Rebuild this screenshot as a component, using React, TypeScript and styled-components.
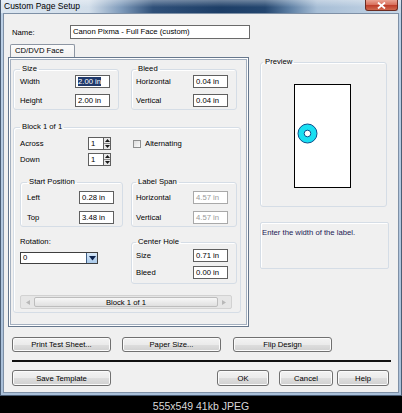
import styled, { createGlobalStyle } from 'styled-components';

const GlobalStyle = createGlobalStyle`
  html, body {
    margin: 0;
    padding: 0;
    background: #000;
  }
  body {
    font-family: "Liberation Sans", Arial, sans-serif;
    font-size: 7.7px;
    color: #000;
  }
  * {
    box-sizing: border-box;
  }
`;

export default function App() {
  return (
    <>
      <GlobalStyle />
      <Page>
        <Window>
          <TitleBar>
            <Title>Custom Page Setup</Title>
            <CloseButton>
              <svg width="9" height="7" viewBox="0 0 9 7">
                <path d="M1 0.5 L8 6.5 M8 0.5 L1 6.5" stroke="#fff" strokeWidth="1.8" />
              </svg>
            </CloseButton>
          </TitleBar>
          <Client>
            <NameRow>
              <NameLabel>Name:</NameLabel>
              <NameInput>Canon Pixma - Full Face (custom)</NameInput>
            </NameRow>

            <MainRow>
              <LeftCol>
                <Tab>CD/DVD Face</Tab>
                <Panel>
                  <PairRow>
                    <Group $w={106}>
                      <Legend>Size</Legend>
                      <Fields $gap={6} $top={1}>
                        <FieldLabel>Width</FieldLabel>
                        <TextBox>
                          <Selected>2.00 in</Selected>
                        </TextBox>
                        <FieldLabel>Height</FieldLabel>
                        <TextBox>2.00 in</TextBox>
                      </Fields>
                    </Group>
                    <Group $w={106} $left={4}>
                      <Legend>Bleed</Legend>
                      <Fields $gap={6} $top={1}>
                        <FieldLabel>Horizontal</FieldLabel>
                        <TextBox>0.04 in</TextBox>
                        <FieldLabel>Vertical</FieldLabel>
                        <TextBox>0.04 in</TextBox>
                      </Fields>
                    </Group>
                  </PairRow>

                  <BlockGroup>
                    <Legend>Block 1 of 1</Legend>
                    <BlockGrid>
                      <SpinRow>
                        <SpinLabel>Across</SpinLabel>
                        <Spinner value="1" />
                      </SpinRow>
                      <CheckRow>
                        <CheckBox />
                        <span>Alternating</span>
                      </CheckRow>
                      <SpinRow $top={3}>
                        <SpinLabel>Down</SpinLabel>
                        <Spinner value="1" />
                      </SpinRow>
                      <div />

                      <Group $w={103} $mt={11}>
                        <Legend>Start Position</Legend>
                        <Fields $gap={7} $top={4}>
                          <FieldLabel>Left</FieldLabel>
                          <TextBox>0.28 in</TextBox>
                          <FieldLabel>Top</FieldLabel>
                          <TextBox>3.48 in</TextBox>
                        </Fields>
                      </Group>
                      <Group $w={106} $mt={11} $left={4}>
                        <Legend>Label Span</Legend>
                        <Fields $gap={7} $top={4}>
                          <FieldLabel>Horizontal</FieldLabel>
                          <TextBox $disabled>4.57 in</TextBox>
                          <FieldLabel>Vertical</FieldLabel>
                          <TextBox $disabled>4.57 in</TextBox>
                        </Fields>
                      </Group>

                      <RotationCol>
                        <span>Rotation:</span>
                        <Combo>
                          <ComboValue>0</ComboValue>
                          <ComboButton>
                            <svg width="7" height="5" viewBox="0 0 7 5">
                              <path d="M0 0 H7 L3.5 4.5 Z" fill="#0d2450" />
                            </svg>
                          </ComboButton>
                        </Combo>
                      </RotationCol>
                      <Group $w={106} $mt={10} $left={4}>
                        <Legend>Center Hole</Legend>
                        <Fields $gap={4} $top={2} $bottom={4}>
                          <FieldLabel>Size</FieldLabel>
                          <TextBox>0.71 in</TextBox>
                          <FieldLabel>Bleed</FieldLabel>
                          <TextBox>0.00 in</TextBox>
                        </Fields>
                      </Group>

                      <ScrollBar>
                        <ScrollArrow>
                          <svg width="4" height="5" viewBox="0 0 4 5">
                            <path d="M4 0 V5 L0 2.5 Z" fill="#b8b8b8" />
                          </svg>
                        </ScrollArrow>
                        <ScrollThumb>Block 1 of 1</ScrollThumb>
                        <ScrollArrow>
                          <svg width="4" height="5" viewBox="0 0 4 5">
                            <path d="M0 0 V5 L4 2.5 Z" fill="#b8b8b8" />
                          </svg>
                        </ScrollArrow>
                      </ScrollBar>
                    </BlockGrid>
                  </BlockGroup>
                </Panel>
              </LeftCol>

              <RightCol>
                <PreviewGroup>
                  <Legend>Preview</Legend>
                  <LabelSheet>
                    <svg width="55" height="102" viewBox="0 0 55 102">
                      <circle cx="12.5" cy="48.5" r="9.5" fill="#19dff2" stroke="#0b4f8c" strokeWidth="1" />
                      <circle cx="12.5" cy="48.5" r="3.3" fill="#fff" stroke="#0b4f8c" strokeWidth="1" />
                    </svg>
                  </LabelSheet>
                </PreviewGroup>
                <HintBox>Enter the width of the label.</HintBox>
              </RightCol>
            </MainRow>

            <ButtonRow $top={10}>
              <Button $w={99}>Print Test Sheet...</Button>
              <Button $w={99} $ml={11}>Paper Size...</Button>
              <Button $w={99} $ml={12}>Flip Design</Button>
            </ButtonRow>
            <Separator />
            <ButtonRow $top={0}>
              <Button $w={99} $h={16}>Save Template</Button>
              <Spacer />
              <Button $w={52} $h={16}>OK</Button>
              <Button $w={54} $h={16} $ml={10}>Cancel</Button>
              <Button $w={52} $h={16} $ml={4}>Help</Button>
            </ButtonRow>
          </Client>
        </Window>
        <Caption>555x549 41kb JPEG</Caption>
      </Page>
    </>
  );
}

function Spinner({ value }: { value: string }) {
  return (
    <SpinBox>
      <SpinField>{value}</SpinField>
      <SpinArrows>
        <SpinHalf>
          <svg width="5" height="3" viewBox="0 0 5 3">
            <path d="M0 3 H5 L2.5 0 Z" fill="#1a1a1a" />
          </svg>
        </SpinHalf>
        <SpinHalf>
          <svg width="5" height="3" viewBox="0 0 5 3">
            <path d="M0 0 H5 L2.5 3 Z" fill="#1a1a1a" />
          </svg>
        </SpinHalf>
      </SpinArrows>
    </SpinBox>
  );
}

const Page = styled.div`
  width: 402px;
  height: 413px;
  display: flex;
  flex-direction: column;
  background: #000;
  overflow: hidden;
`;

const Window = styled.div`
  width: 402px;
  height: 396px;
  display: flex;
  flex-direction: column;
  border: 1px solid #4a5d74;
  border-top: none;
  background: linear-gradient(#bcd0e6, #a9bfd8);
`;

const TitleBar = styled.div`
  height: 13px;
  display: flex;
  justify-content: space-between;
  align-items: flex-start;
  background:
    linear-gradient(rgba(255, 255, 255, 0.35), rgba(255, 255, 255, 0) 55%),
    linear-gradient(
      to right,
      #dbe6f1 0%,
      #d2deea 22%,
      #7f9bbb 30%,
      #2f5079 38%,
      #1d3e67 55%,
      #24466f 66%,
      #5c7ea3 72%,
      #a7bed6 79%,
      #c6d6e6 100%
    );
`;

const Title = styled.span`
  padding-left: 3px;
  line-height: 13px;
  font-size: 8.5px;
  color: #000;
`;

const CloseButton = styled.div`
  width: 33px;
  height: 11px;
  margin-right: 3px;
  display: flex;
  align-items: center;
  justify-content: center;
  border: 1px solid #6b2c22;
  border-top: none;
  border-radius: 0 0 3px 3px;
  background: linear-gradient(#eba493 0%, #d9735f 45%, #bf3f2b 55%, #d06a4f 100%);
`;

const Client = styled.div`
  flex: 1;
  margin: 0 2px 2px;
  padding: 11px 9px 0 4px;
  display: flex;
  flex-direction: column;
  border: 1px solid #7e90a6;
  background: #f0f0f0;
`;

const NameRow = styled.div`
  display: flex;
  align-items: center;
  height: 14px;
  padding-left: 4px;
`;

const NameLabel = styled.span`
  width: 58px;
`;

const NameInput = styled.div`
  width: 180px;
  height: 14px;
  padding-left: 2px;
  line-height: 12px;
  border: 1px solid #6a6a6a;
  background: #fff;
`;

const MainRow = styled.div`
  display: flex;
  margin-top: 5px;
`;

const LeftCol = styled.div`
  width: 242px;
  display: flex;
  flex-direction: column;
`;

const Tab = styled.div`
  width: 65px;
  height: 13px;
  margin-left: 2px;
  padding-left: 4px;
  line-height: 12px;
  border: 1px solid #8d96a3;
  border-bottom: none;
  border-radius: 2px 2px 0 0;
  background: linear-gradient(#fbfbfb, #f1f1f1);
`;

const Panel = styled.div`
  height: 270px;
  padding: 6px 3px 0 4px;
  border: 1px solid #66778d;
  box-shadow: inset 0 0 0 1px #ffffff, inset 0 0 0 2px #a4b0c0;
  background: #f0f0f0;
`;

const PairRow = styled.div`
  display: flex;
  gap: 12px;
`;

const Group = styled.fieldset<{ $w: number; $mt?: number; $left?: number }>`
  width: ${(p) => p.$w}px;
  min-width: 0;
  margin: ${(p) => p.$mt ?? 0}px 0 0;
  padding: 0 8px 0 ${(p) => p.$left ?? 6}px;
  border: 1px solid #d5dde6;
  border-radius: 3px;
  box-shadow: inset 1px 1px 0 #ffffff;
`;

const Legend = styled.legend`
  padding: 0 2px;
  line-height: 10px;
  font-size: 7.7px;
  color: #000;
`;

const Fields = styled.div<{ $gap: number; $top: number; $bottom?: number }>`
  display: grid;
  grid-template-columns: 1fr 35px;
  grid-auto-rows: 13px;
  row-gap: ${(p) => p.$gap}px;
  align-items: center;
  padding: ${(p) => p.$top}px 0 ${(p) => p.$bottom ?? 2}px;
`;

const FieldLabel = styled.span`
  white-space: nowrap;
`;

const TextBox = styled.div<{ $disabled?: boolean }>`
  height: 13px;
  padding-left: 2px;
  line-height: 11px;
  white-space: nowrap;
  border: 1px solid ${(p) => (p.$disabled ? '#a9a9a9' : '#5f5f5f')};
  background: #fff;
  color: ${(p) => (p.$disabled ? '#9b9b9b' : '#000')};
`;

const Selected = styled.span`
  background: #20396b;
  color: #fff;
`;

const BlockGroup = styled.fieldset`
  width: 228px;
  min-width: 0;
  margin: 12px 0 0;
  padding: 0 3px 3px 6px;
  border: 1px solid #d5dde6;
  border-radius: 3px;
  box-shadow: inset 1px 1px 0 #ffffff;
`;

const BlockGrid = styled.div`
  display: grid;
  grid-template-columns: 103px 106px;
  column-gap: 8px;
  padding-top: 5px;
`;

const SpinRow = styled.div<{ $top?: number }>`
  display: flex;
  align-items: center;
  margin-top: ${(p) => p.$top ?? 0}px;
`;

const SpinLabel = styled.span`
  width: 68px;
`;

const SpinBox = styled.div`
  display: flex;
  height: 13px;
`;

const SpinField = styled.div`
  width: 15px;
  height: 13px;
  padding-left: 2px;
  line-height: 11px;
  border: 1px solid #5f5f5f;
  border-right: none;
  background: #fff;
`;

const SpinArrows = styled.div`
  width: 8px;
  display: flex;
  flex-direction: column;
  border: 1px solid #5f5f5f;
  background: #e9e9e9;
`;

const SpinHalf = styled.div`
  flex: 1;
  display: flex;
  align-items: center;
  justify-content: center;
  & + & {
    border-top: 1px solid #8a8a8a;
  }
`;

const CheckRow = styled.div`
  display: flex;
  align-items: center;
  gap: 4px;
  padding-left: 2px;
`;

const CheckBox = styled.div`
  width: 8px;
  height: 8px;
  border: 1px solid #8e8f8f;
  background: linear-gradient(135deg, #dcdcdc, #fbfbfb);
`;

const RotationCol = styled.div`
  display: flex;
  flex-direction: column;
  margin-top: 10px;
  line-height: 10px;
`;

const Combo = styled.div`
  width: 78px;
  height: 12px;
  margin-top: 5px;
  display: flex;
  border: 1px solid #3f3f3f;
  background: #fff;
`;

const ComboValue = styled.div`
  flex: 1;
  padding-left: 2px;
  line-height: 10px;
`;

const ComboButton = styled.div`
  width: 11px;
  display: flex;
  align-items: center;
  justify-content: center;
  border-left: 1px solid #3f5f86;
  background: linear-gradient(#d8e9f9, #a9c9ea);
`;

const ScrollBar = styled.div`
  grid-column: 1 / 3;
  width: 212px;
  height: 14px;
  margin-top: 11px;
  display: flex;
  align-items: stretch;
  padding: 1px;
  border: 1px solid #d2d2d2;
  border-radius: 2px;
  background: #e6e6e6;
`;

const ScrollArrow = styled.div`
  width: 12px;
  display: flex;
  align-items: center;
  justify-content: center;
`;

const ScrollThumb = styled.div`
  flex: 1;
  display: flex;
  align-items: center;
  justify-content: center;
  border: 1px solid #bdbdbd;
  border-radius: 2px;
  background: linear-gradient(#f7f7f7, #e0e0e0);
`;

const RightCol = styled.div`
  display: flex;
  flex-direction: column;
  margin-left: 11px;
  padding-top: 13px;
`;

const PreviewGroup = styled.fieldset`
  width: 127px;
  height: 150px;
  min-width: 0;
  margin: 0;
  padding: 0 0 0 2px;
  border: 1px solid #d5dde6;
  border-radius: 3px;
  box-shadow: inset 1px 1px 0 #ffffff;
`;

const LabelSheet = styled.div`
  width: 57px;
  height: 104px;
  margin: 17px 0 0 31px;
  border: 1px solid #000;
  background: #fff;
`;

const HintBox = styled.div`
  width: 129px;
  height: 47px;
  margin-top: 15px;
  padding: 5px 0 0 1px;
  border: 1px solid #d5dde6;
  border-radius: 2px;
  box-shadow: inset 1px 1px 0 #ffffff;
  color: #1b1b55;
`;

const ButtonRow = styled.div<{ $top: number }>`
  display: flex;
  margin-top: ${(p) => p.$top}px;
  padding-left: 4px;
`;

const Spacer = styled.div`
  flex: 1;
`;

const Button = styled.button<{ $w: number; $h?: number; $ml?: number }>`
  width: ${(p) => p.$w}px;
  height: ${(p) => p.$h ?? 15}px;
  flex: none;
  margin: 0 0 0 ${(p) => p.$ml ?? 0}px;
  padding: 0;
  border: 1px solid #707070;
  border-radius: 3px;
  background: linear-gradient(#f3f3f3 0%, #ebebeb 50%, #dedede 51%, #d0d0d0 100%);
  box-shadow: inset 0 0 0 1px #fbfbfb;
  font: 7.7px "Liberation Sans", Arial, sans-serif;
  color: #000;
`;

const Separator = styled.div`
  width: 379px;
  height: 2px;
  margin: 8px 0 8px 4px;
  background: #111;
`;

const Caption = styled.div`
  flex: 1;
  display: flex;
  align-items: center;
  justify-content: center;
  padding-top: 2px;
  font-size: 10.5px;
  color: #d8d8d8;
`;
